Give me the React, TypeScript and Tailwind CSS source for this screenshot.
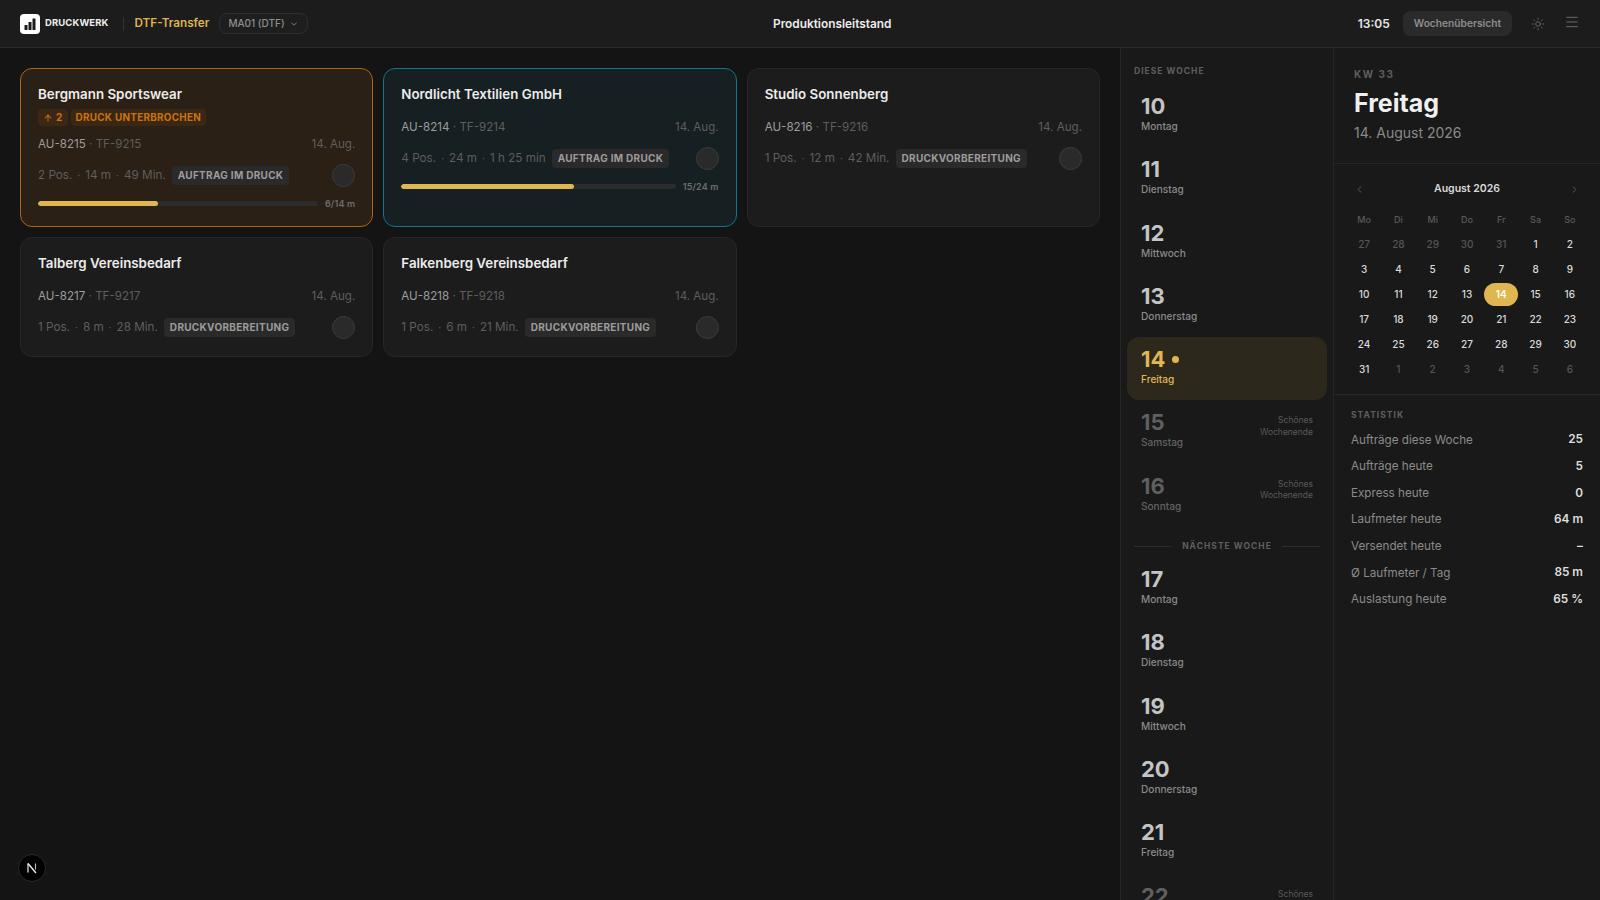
import { ChevronDown, ChevronLeft, ChevronRight, Sun, Menu, ArrowUp } from "lucide-react";

type Job = {
  name: string;
  au: string;
  tf: string;
  meta: string[];
  status: string;
  tone: "orange" | "teal" | "plain";
  progress?: { pct: number; label: string };
  alert?: boolean;
};

const jobs: Job[] = [
  { name: "Bergmann Sportswear", au: "AU-8215", tf: "TF-9215", meta: ["2 Pos.", "14 m", "49 Min."], status: "AUFTRAG IM DRUCK", tone: "orange", progress: { pct: 43, label: "6/14 m" }, alert: true },
  { name: "Nordlicht Textilien GmbH", au: "AU-8214", tf: "TF-9214", meta: ["4 Pos.", "24 m", "1 h 25 min"], status: "AUFTRAG IM DRUCK", tone: "teal", progress: { pct: 63, label: "15/24 m" } },
  { name: "Studio Sonnenberg", au: "AU-8216", tf: "TF-9216", meta: ["1 Pos.", "12 m", "42 Min."], status: "DRUCKVORBEREITUNG", tone: "plain" },
  { name: "Talberg Vereinsbedarf", au: "AU-8217", tf: "TF-9217", meta: ["1 Pos.", "8 m", "28 Min."], status: "DRUCKVORBEREITUNG", tone: "plain" },
  { name: "Falkenberg Vereinsbedarf", au: "AU-8218", tf: "TF-9218", meta: ["1 Pos.", "6 m", "21 Min."], status: "DRUCKVORBEREITUNG", tone: "plain" },
];

function JobCard({ job }: { job: Job }) {
  const toneClass =
    job.tone === "orange"
      ? "border-[#b0640f] bg-[#2b2016]"
      : job.tone === "teal"
        ? "border-[#0e7490] bg-[#161f21]"
        : "border-[#272727] bg-[#1c1c1c]";
  return (
    <div className={`rounded-xl border px-[17px] pt-[15px] ${job.alert ? "pb-[18px]" : "pb-[17px]"} ${toneClass}`}>
      <div className="h-5 text-[13.35px] leading-5 font-semibold whitespace-nowrap text-[#ececec]">{job.name}</div>
      {job.alert && (
        <div className="mt-[5px] flex h-[17px] items-center gap-[3px] text-[9.9px] font-bold tracking-[0.03em] text-[#c9720f]">
          <span className="flex h-[17px] items-center gap-[3px] rounded bg-[#3b2814] px-[5px]">
            <ArrowUp size={10} strokeWidth={2.5} />
            2
          </span>
          <span className="flex h-[17px] items-center rounded bg-[#3b2814] px-[5px]">DRUCK UNTERBROCHEN</span>
        </div>
      )}
      <div className={`${job.alert ? "mt-[8px]" : "mt-[13px]"} flex h-5 items-center justify-between text-[11.6px] leading-5`}>
        <span>
          <span className="text-[#9c9c9c]">{job.au}</span>
          <span className="text-[#5e5e5e]"> · {job.tf}</span>
        </span>
        <span className="text-[#5e5e5e]">14. Aug.</span>
      </div>
      <div className="mt-[9px] flex h-6 items-center">
        <div className="mt-[2px] flex items-center text-[11.7px] whitespace-nowrap text-[#5e5e5e]">
          {job.meta.map((m, i) => (
            <span key={m} className="flex items-center">
              {i > 0 && <span className="px-[5px] text-[10px]">·</span>}
              {m}
            </span>
          ))}
        </div>
        <span className="mt-[1px] ml-[6px] flex h-[19px] items-center rounded bg-[#2a2a2a] px-[6px] text-[10px] font-bold tracking-[0.03em] whitespace-nowrap text-[#9c9c9c]">
          {job.status}
        </span>
        <span className="ml-auto h-[23px] w-[23px] shrink-0 rounded-full border border-[#3c3c3c] bg-[#2a2a2a]" />
      </div>
      {job.progress && (
        <div className="mt-[12px] flex h-[9px] items-center gap-[7px]">
          <div className="h-[5px] flex-1 overflow-hidden rounded-full bg-[#2c2c2c]">
            <div className="h-full rounded-full bg-[#e0b650]" style={{ width: `${job.progress.pct}%` }} />
          </div>
          <span className="text-[9px] font-semibold tracking-[0.02em] text-[#6e6e6e]">{job.progress.label}</span>
        </div>
      )}
    </div>
  );
}

function DayRow({ n, name, today, off }: { n: number; name: string; today?: boolean; off?: boolean }) {
  const numColor = today ? "text-[#e0b650]" : off ? "text-[#5f5f5f]" : "text-[#c4c4c4]";
  const nameColor = today ? "text-[#e0b650]" : off ? "text-[#636363]" : "text-[#8a8a8a]";
  return (
    <div className={`flex h-[63.3px] shrink-0 items-start justify-between rounded-xl px-[14px] pt-[9px] ${today ? "bg-[#2d281c]" : ""}`}>
      <div>
        <div className={`flex h-[26px] items-center gap-[7px] text-[22px] leading-[26px] font-bold ${numColor}`}>
          {n}
          {today && <span className="h-[7px] w-[7px] rounded-full bg-[#e0b650]" />}
        </div>
        <div className={`text-[10.1px] leading-[15px] font-medium ${nameColor}`}>{name}</div>
      </div>
      {off && (
        <div className="mt-[6px] text-right text-[8.5px] leading-[11.5px] text-[#5a5a5a]">
          Schönes
          <br />
          Wochenende
        </div>
      )}
    </div>
  );
}

const calDays: { d: number; muted?: boolean }[] = [
  ...[27, 28, 29, 30, 31].map((d) => ({ d, muted: true })),
  ...Array.from({ length: 31 }, (_, i) => ({ d: i + 1 })),
  ...[1, 2, 3, 4, 5, 6].map((d) => ({ d, muted: true })),
];

const stats = [
  ["Aufträge diese Woche", "25"],
  ["Aufträge heute", "5"],
  ["Express heute", "0"],
  ["Laufmeter heute", "64 m"],
  ["Versendet heute", "–"],
  ["Ø Laufmeter / Tag", "85 m"],
  ["Auslastung heute", "65 %"],
];

export default function App() {
  return (
    <div className="relative flex h-[900px] w-[1600px] flex-col overflow-hidden bg-[#141414] font-['Inter',sans-serif]">
      <header className="relative flex h-[48px] shrink-0 items-center border-b border-[#2a2a2a] bg-[#1c1c1c] pr-[20px] pl-[20px]">
        <div className="flex h-5 w-5 items-center justify-center rounded-[4px] bg-white">
          <svg width="14" height="14" viewBox="0 0 14 14" fill="#1c1c1c">
            <rect x="1.5" y="8" width="3" height="5" rx="0.5" />
            <rect x="5.5" y="5" width="3" height="8" rx="0.5" />
            <rect x="9.5" y="1.5" width="3" height="11.5" rx="0.5" />
          </svg>
        </div>
        <span className="ml-[5px] text-[9.5px] font-bold tracking-[0.01em] text-[#ececec]">DRUCKWERK</span>
        <span className="mr-[10px] ml-[15px] h-[14px] w-px bg-[#333333]" />
        <span className="text-[11.7px] font-semibold text-[#dcb44f]">DTF-Transfer</span>
        <div className="ml-[10px] flex h-[21px] items-center gap-[4px] rounded-lg border border-[#2e2e2e] bg-[#1e1e1e] px-[8px] text-[10px] font-medium text-[#8e8e8e]">
          MA01 (DTF)
          <ChevronDown size={10} />
        </div>
        <span className="absolute top-[16px] left-[773px] text-[11.85px] leading-4 font-semibold text-[#ececec]">Produktionsleitstand</span>
        <div className="ml-auto flex items-center">
          <span className="text-[12px] font-semibold text-[#e6e6e6]">13:05</span>
          <span className="ml-[13px] flex h-[25px] items-center rounded-lg bg-[#2a2a2a] px-[11px] text-[10.2px] font-semibold text-[#8e8e8e]">
            Wochenübersicht
          </span>
          <Sun size={14} strokeWidth={1.25} className="ml-[19px] text-[#7a7a7a]" />
          <Menu size={16} strokeWidth={1.25} className="mb-[4px] ml-[19px] text-[#7a7a7a]" />
        </div>
      </header>

      <div className="flex min-h-0 flex-1">
        <main className="w-[1120px] shrink-0 p-5">
          <div className="grid grid-cols-3 items-stretch gap-[10px]">
            {jobs.map((j) => (
              <JobCard key={j.name} job={j} />
            ))}
          </div>
        </main>

        <aside className="flex w-[214px] shrink-0 flex-col overflow-hidden border-x border-[#262626] bg-[#191919] px-[6px]">
          <div className="mt-[17px] mb-[7px] h-3 px-[7px] text-[8.5px] leading-3 font-bold tracking-[0.12em] text-[#5f5f5f]">DIESE WOCHE</div>
          <DayRow n={10} name="Montag" />
          <DayRow n={11} name="Dienstag" />
          <DayRow n={12} name="Mittwoch" />
          <DayRow n={13} name="Donnerstag" />
          <DayRow n={14} name="Freitag" today />
          <DayRow n={15} name="Samstag" off />
          <DayRow n={16} name="Sonntag" off />
          <div className="mt-[13px] mb-[5px] flex h-3 shrink-0 items-center gap-[10px] px-[7px] text-[8.5px] font-bold tracking-[0.12em] whitespace-nowrap text-[#5f5f5f]">
            <span className="h-px flex-1 bg-[#2c2c2c]" />
            NÄCHSTE WOCHE
            <span className="h-px flex-1 bg-[#2c2c2c]" />
          </div>
          <DayRow n={17} name="Montag" />
          <DayRow n={18} name="Dienstag" />
          <DayRow n={19} name="Mittwoch" />
          <DayRow n={20} name="Donnerstag" />
          <DayRow n={21} name="Freitag" />
          <DayRow n={22} name="Samstag" off />
        </aside>

        <aside className="flex min-w-0 flex-1 flex-col bg-[#191919]">
          <div className="h-[116px] shrink-0 border-b border-[#262626] px-5 pt-5">
            <div className="h-3 text-[10px] leading-3 font-bold tracking-[0.15em] text-[#5f5f5f]">KW 33</div>
            <div className="mt-[7px] text-[25px] leading-8 font-bold text-[#f0f0f0]">Freitag</div>
            <div className="mt-[4px] text-[14px] leading-5 text-[#8a8a8a]">14. August 2026</div>
          </div>
          <div className="h-[231px] shrink-0 border-b border-[#262626] px-[13px] pt-[15px]">
            <div className="flex h-5 items-center justify-between pr-[7px] pl-[7px] text-[#5f5f5f]">
              <ChevronLeft size={11} />
              <span className="text-[10.5px] font-semibold text-[#d8d8d8]">August 2026</span>
              <ChevronRight size={11} />
            </div>
            <div className="mt-[8px] grid grid-cols-7 text-center text-[9px] leading-[25px] font-medium text-[#5a5a5a]">
              {["Mo", "Di", "Mi", "Do", "Fr", "Sa", "So"].map((d) => (
                <span key={d} className="h-[25px]">
                  {d}
                </span>
              ))}
              {calDays.map((c, i) =>
                c.d === 14 && !c.muted ? (
                  <span key={i} className="flex h-[25px] items-center justify-center">
                    <span className="flex h-[23px] w-[34px] items-center justify-center rounded-full bg-[#e0b650] text-[10px] font-semibold text-white">14</span>
                  </span>
                ) : (
                  <span key={i} className={`h-[25px] text-[10px] ${c.muted ? "text-[#555555]" : "font-medium text-[#dadada]"}`}>
                    {c.d}
                  </span>
                ),
              )}
            </div>
          </div>
          <div className="px-[17px] pt-[14px]">
            <div className="h-3 text-[8.5px] leading-3 font-bold tracking-[0.12em] text-[#5f5f5f]">STATISTIK</div>
            <div className="mt-[6px]">
              {stats.map(([k, v]) => (
                <div key={k} className="flex h-[26.6px] items-center justify-between">
                  <span className="text-[11.65px] text-[#8a8a8a]">{k}</span>
                  <span className="text-[11.8px] font-semibold text-[#dedede]">{v}</span>
                </div>
              ))}
            </div>
          </div>
        </aside>
      </div>

      <div className="absolute top-[854px] left-[18px] flex h-7 w-7 items-center justify-center rounded-full border border-[#2a2a2a] bg-black">
        <svg width="14" height="14" viewBox="0 0 14 14" fill="none">
          <path d="M3 2.5v9" stroke="#eeeeee" strokeWidth="1.2" />
          <path d="M3 2.5 11 12" stroke="#eeeeee" strokeWidth="1.4" />
          <path d="M10.5 2.5v6" stroke="#bbbbbb" strokeWidth="1.2" />
        </svg>
      </div>
    </div>
  );
}
